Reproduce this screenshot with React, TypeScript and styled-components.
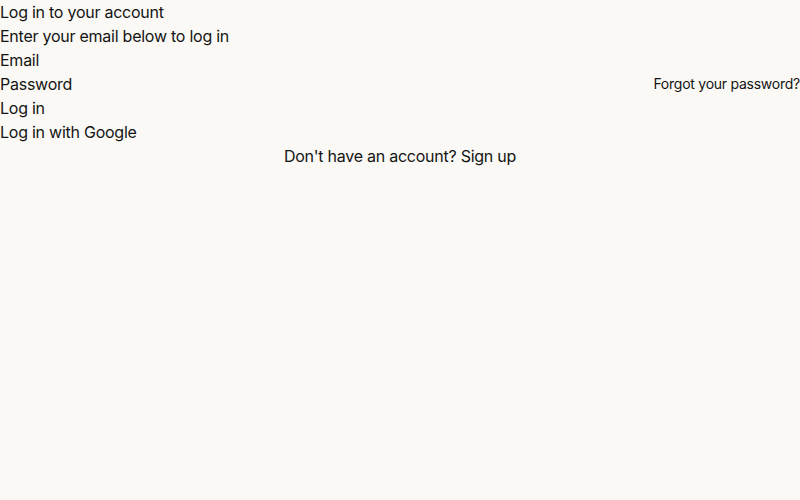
import styled, { createGlobalStyle } from "styled-components";

const Global = createGlobalStyle`
  body {
    margin: 0;
    background: #faf9f5;
    color: #141413;
    font-family: Inter, "Liberation Sans", sans-serif;
    font-size: 16px;
    line-height: 24px;
    letter-spacing: -0.25px;
  }
`;

const Form = styled.form`
  display: flex;
  flex-direction: column;
`;

const Heading = styled.div`
  font-size: 16px;
`;

const Text = styled.div`
  font-size: 16px;
`;

const LabelRow = styled.div`
  display: flex;
  justify-content: space-between;
  align-items: center;
`;

const Label = styled.label`
  font-size: 16px;
`;

const SmallLink = styled.a`
  font-size: 14px;
  color: inherit;
  text-decoration: none;
`;

const Action = styled.div`
  font-size: 16px;
`;

const Footer = styled.div`
  text-align: center;
`;

const FooterLink = styled.a`
  color: inherit;
  text-decoration: none;
`;

export default function App() {
  return (
    <>
      <Global />
      <Form>
        <Heading>Log in to your account</Heading>
        <Text>Enter your email below to log in</Text>
        <Label>Email</Label>
        <LabelRow>
          <Label>Password</Label>
          <SmallLink href="#">Forgot your password?</SmallLink>
        </LabelRow>
        <Action>Log in</Action>
        <Action>Log in with Google</Action>
        <Footer>
          Don't have an account? <FooterLink href="#">Sign up</FooterLink>
        </Footer>
      </Form>
    </>
  );
}
